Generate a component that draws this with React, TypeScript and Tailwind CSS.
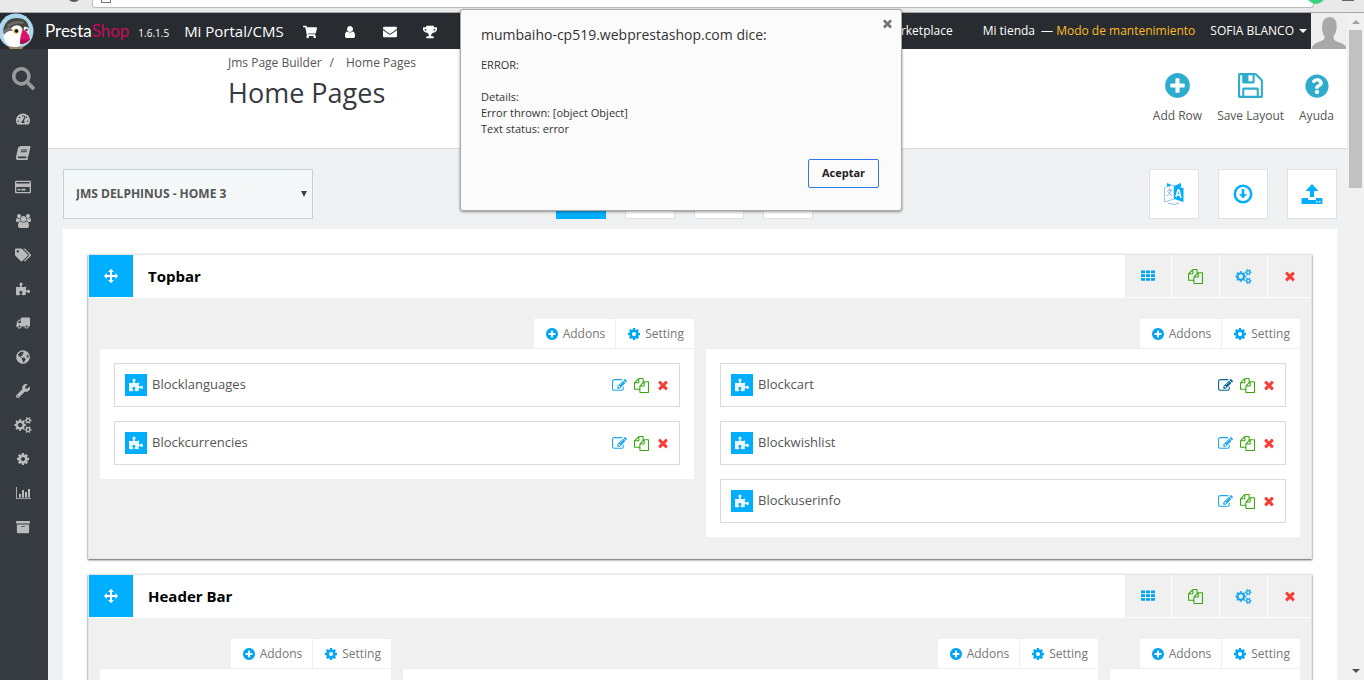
import type { ReactNode } from "react";
import {
  FaArchive,
  FaBook,
  FaEnvelope,
  FaGlobeAmericas,
  FaPuzzlePiece,
  FaQuestionCircle,
  FaRegCreditCard,
  FaSearch,
  FaShoppingCart,
  FaTachometerAlt,
  FaTags,
  FaTrophy,
  FaTruck,
  FaWrench,
} from "react-icons/fa";

const paths = {
  files:
    "M1696 384q40 0 68 28t28 68v1216q0 40-28 68t-68 28h-960q-40 0-68-28t-28-68v-288h-544q-40 0-68-28t-28-68v-672q0-40 20-88t48-76l408-408q28-28 76-48t88-20h416q40 0 68 28t28 68v328q68-40 128-40h416zm-544 213l-299 299h299v-299zm-640-384l-299 299h299v-299zm196 647l316-316v-416h-384v416q0 40-28 68t-68 28h-416v640h512v-256q0-40 20-88t48-76zm956 804v-1152h-384v416q0 40-28 68t-68 28h-416v640h896z",
  edit: "M888 1184l116-116-152-152-116 116v56h96v96h56zm440-720q-16-16-33 1l-350 350q-17 17-1 33t33-1l350-350q17-17 1-33zm80 594v190q0 119-84.5 203.5t-203.5 84.5h-832q-119 0-203.5-84.5t-84.5-203.5v-832q0-119 84.5-203.5t203.5-84.5h832q63 0 117 25 15 7 18 23 3 17-9 29l-49 49q-14 14-32 8-23-6-45-6h-832q-66 0-113 47t-47 113v832q0 66 47 113t113 47h832q66 0 113-47t47-113v-126q0-13 9-22l64-64q15-15 35-7t20 29zm-96-738l288 288-672 672h-288v-288zm444 132l-92 92-288-288 92-92q28-28 68-28t68 28l152 152q28 28 28 68t-28 68z",
  cog: "M1152 896q0-106-75-181t-181-75-181 75-75 181 75 181 181 75 181-75 75-181zm512-109v222q0 12-8 23t-20 13l-185 28q-19 54-39 91 35 50 107 138 10 12 10 25t-9 23q-27 37-99 108t-94 71q-12 0-26-9l-138-108q-44 23-91 38-16 136-29 186-7 28-36 28h-222q-14 0-24.5-8.5t-11.5-21.5l-28-184q-49-16-90-37l-141 107q-10 9-25 9-14 0-25-11-126-114-165-168-7-10-7-23 0-12 8-23 15-21 51-66.5t54-70.5q-27-50-41-99l-183-27q-13-2-21-12.5t-8-23.5v-222q0-12 8-23t19-13l186-28q14-46 39-92-40-57-107-138-10-12-10-24 0-10 9-23 26-36 98.5-107.5t94.5-71.5q13 0 26 10l138 107q44-23 91-38 16-136 29-186 7-28 36-28h222q14 0 24.5 8.5t11.5 21.5l28 184q49 16 90 37l142-107q9-9 24-9 13 0 25 10 129 119 165 170 7 8 7 22 0 12-8 23-15 21-51 66.5t-54 70.5q26 50 41 98l183 28q13 2 21 12.5t8 23.5z",
  cogs: "M832 896q0-106-75-181t-181-75-181 75-75 181 75 181 181 75 181-75 75-181zm768 512q0-52-38-90t-90-38-90 38-38 90q0 53 37.5 90.5t90.5 37.5 90.5-37.5 37.5-90.5zm0-1024q0-52-38-90t-90-38-90 38-38 90q0 53 37.5 90.5t90.5 37.5 90.5-37.5 37.5-90.5zm-384 421v185q0 10-7 19.5t-16 10.5l-155 24q-11 35-32 76 34 48 90 115 7 11 7 20 0 12-7 19-23 30-82.5 89.5t-78.5 59.5q-11 0-21-7l-115-90q-37 19-77 31-11 108-23 155-7 24-30 24h-186q-11 0-20-7.5t-10-17.5l-23-153q-34-10-75-31l-118 89q-7 7-20 7-11 0-21-8-144-133-144-160 0-9 7-19 10-14 41-53t47-61q-23-44-35-82l-152-24q-10-1-17-9.5t-7-19.5v-185q0-10 7-19.5t16-10.5l155-24q11-35 32-76-34-48-90-115-7-11-7-20 0-12 7-20 22-30 82-89t79-59q11 0 21 7l115 90q34-18 77-32 11-108 23-154 7-24 30-24h186q11 0 20 7.5t10 17.5l23 153q34 10 75 31l118-89q8-7 20-7 11 0 21 8 144 133 144 160 0 8-7 19-12 16-42 54t-45 60q23 48 34 82l152 23q10 2 17 10.5t7 19.5zm640 533v140q0 16-149 31-12 27-30 52 51 113 51 138 0 4-4 7-122 71-124 71-8 0-46-47t-52-68q-20 2-30 2t-30-2q-14 21-52 68t-46 47q-2 0-124-71-4-3-4-7 0-25 51-138-18-25-30-52-149-15-149-31v-140q0-16 149-31 13-29 30-52-51-113-51-138 0-4 4-7 4-2 35-20t59-34 30-16q8 0 46 46.5t52 67.5q20-2 30-2t30 2q51-71 92-112l6-2q4 0 124 70 4 3 4 7 0 25-51 138 17 23 30 52 149 15 149 31zm0-1024v140q0 16-149 31-12 27-30 52 51 113 51 138 0 4-4 7-122 71-124 71-8 0-46-47t-52-68q-20 2-30 2t-30-2q-14 21-52 68t-46 47q-2 0-124-71-4-3-4-7 0-25 51-138-18-25-30-52-149-15-149-31v-140q0-16 149-31 13-29 30-52-51-113-51-138 0-4 4-7 4-2 35-20t59-34 30-16q8 0 46 46.5t52 67.5q20-2 30-2t30 2q51-71 92-112l6-2q4 0 124 70 4 3 4 7 0 25-51 138 17 23 30 52 149 15 149 31z",
  times:
    "M1490 1322q0 40-28 68l-136 136q-28 28-68 28t-68-28l-294-294-294 294q-28 28-68 28t-68-28l-136-136q-28-28-28-68t28-68l294-294-294-294q-28-28-28-68t28-68l136-136q28-28 68-28t68 28l294 294 294-294q28-28 68-28t68 28l136 136q28 28 28 68t-28 68l-294 294 294 294q28 28 28 68z",
  plus: "M1344 960v-128q0-26-19-45t-45-19h-256v-256q0-26-19-45t-45-19h-128q-26 0-45 19t-19 45v256h-256q-26 0-45 19t-19 45v128q0 26 19 45t45 19h256v256q0 26 19 45t45 19h128q26 0 45-19t19-45v-256h256q26 0 45-19t19-45zm320-64q0 209-103 385.5t-279.5 279.5-385.5 103-385.5-103-279.5-279.5-103-385.5 103-385.5 279.5-279.5 385.5-103 385.5 103 279.5 279.5 103 385.5z",
  arrows:
    "M1792 896q0 26-19 45l-256 256q-19 19-45 19t-45-19-19-45v-128h-384v384h128q26 0 45 19t19 45-19 45l-256 256q-19 19-45 19t-45-19l-256-256q-19-19-19-45t19-45 45-19h128v-384h-384v128q0 26-19 45t-45 19-45-19l-256-256q-19-19-19-45t19-45l256-256q19-19 45-19t45 19 19 45v128h384v-384h-128q-26 0-45-19t-19-45 19-45l256-256q19-19 45-19t45 19l256 256q19 19 19 45t-19 45-45 19h-128v384h384v-128q0-26 19-45t45-19 45 19l256 256q19 19 19 45z",
  user: "M1536 1399q0 109-62.5 187t-150.5 78h-854q-88 0-150.5-78t-62.5-187q0-85 8.5-160.5t31.5-152 58.5-131 94-89 134.5-34.5q131 128 313 128t313-128q76 0 134.5 34.5t94 89 58.5 131 31.5 152 8.5 160.5zm-256-887q0 159-112.5 271.5t-271.5 112.5-271.5-112.5-112.5-271.5 112.5-271.5 271.5-112.5 271.5 112.5 112.5 271.5z",
  users:
    "M593 896q-162 5-265 128h-134q-82 0-138-40.5t-56-118.5q0-353 124-353 6 0 43.5 21t97.5 42.5 119 21.5q67 0 133-23-5 37-5 66 0 159 81 283zm1071 637q0 120-73 189.5t-194 69.5h-874q-121 0-194-69.5t-73-189.5q0-53 3.5-103.5t14-109 26.5-108.5 43-97.5 62-81 85.5-53.5 111.5-20q10 0 43 21.5t73 48 107 48 135 21.5 135-21.5 107-48 73-48 43-21.5q61 0 111.5 20t85.5 53.5 62 81 43 97.5 26.5 108.5 14 109 3.5 103.5zm-1024-1277q0 106-75 181t-181 75-181-75-75-181 75-181 181-75 181 75 75 181zm704 384q0 159-112.5 271.5t-271.5 112.5-271.5-112.5-112.5-271.5 112.5-271.5 271.5-112.5 271.5 112.5 112.5 271.5zm576 225q0 78-56 118.5t-138 40.5h-134q-103-123-265-128 81-124 81-283 0-29-5-66 66 23 133 23 59 0 119-21.5t97.5-42.5 43.5-21q124 0 124 353zm-128-609q0 106-75 181t-181 75-181-75-75-181 75-181 181-75 181 75 75 181z",
  th: "M0 192h512v352H0zM640 192h512v352H640zM1280 192h512v352h-512zM0 672h512v352H0zM640 672h512v352H640zM1280 672h512v352h-512zM0 1152h512v352H0zM640 1152h512v352H640zM1280 1152h512v352h-512z",
  chart:
    "M0 128h110v1430h1800v110H0zM384 1024h256v448H384zM768 512h256v960H768zM1152 768h256v704h-256zM1536 384h256v1088h-256z",
  save: "M512 1536h768v-384h-768v384zm896 0h128v-896q0-14-10-38.5t-20-34.5l-281-281q-10-10-34-20t-39-10v416q0 40-28 68t-68 28h-576q-40 0-68-28t-28-68v-416h-128v1280h128v-416q0-40 28-68t68-28h832q40 0 68 28t28 68v416zm-384-928v-320q0-13-9.5-22.5t-22.5-9.5h-192q-13 0-22.5 9.5t-9.5 22.5v320q0 13 9.5 22.5t22.5 9.5h192q13 0 22.5-9.5t9.5-22.5zm640 32v928q0 40-28 68t-68 28h-1344q-40 0-68-28t-28-68v-1344q0-40 28-68t68-28h928q40 0 88 20t76 48l280 280q28 28 48 76t20 88z",
};

function Icon({ name, className }: { name: keyof typeof paths; className: string }) {
  return (
    <svg viewBox="0 0 1792 1792" fill="currentColor" className={`shrink-0 overflow-visible ${className}`} aria-hidden>
      <path d={paths[name]} />
    </svg>
  );
}

const sidebar: { label: string; icon: ReactNode }[] = [
  { label: "Dashboard", icon: <FaTachometerAlt /> },
  { label: "Catalog", icon: <FaBook className="skew-x-[-12deg]" /> },
  { label: "Orders", icon: <FaRegCreditCard className="size-4" /> },
  { label: "Customers", icon: <Icon name="users" className="size-[14px]" /> },
  { label: "Price rules", icon: <FaTags className="size-4" /> },
  { label: "Modules", icon: <FaPuzzlePiece /> },
  { label: "Shipping", icon: <FaTruck className="-scale-x-100" /> },
  { label: "Localization", icon: <FaGlobeAmericas /> },
  { label: "Preferences", icon: <FaWrench /> },
  { label: "Advanced", icon: <Icon name="cogs" className="size-4" /> },
  { label: "Administration", icon: <Icon name="cog" className="size-[14px]" /> },
  { label: "Stats", icon: <Icon name="chart" className="size-[14px]" /> },
  { label: "Stock", icon: <FaArchive /> },
];

function BrowserBar() {
  return (
    <div className="relative flex h-[13px] shrink-0 items-start overflow-hidden border-b border-[#a6a6a6] bg-[#e9e9e9]">
      <div className="ml-[92px] mr-[50px] flex h-2 grow items-start overflow-hidden rounded-b-[3px] border border-t-0 border-[#bdbdbd] bg-white pl-2">
        <span className="h-[3px] w-[10px] shrink-0 border border-t-0 border-[#777]" />
        <input
          aria-label="Address"
          readOnly
          className="-mt-4 ml-[13px] h-4 grow text-[15px] leading-4 text-[#666]"
          defaultValue="mumbaiho-cp519.webprestashop.com/admin123/index.php?controller=AdminJmspagebuilderHomepages"
        />
      </div>
      <span className="absolute left-[67px] top-[-12px] size-[14px] rounded-full border-2 border-[#555]" />
      <span className="absolute right-[39px] top-[-14px] size-[18px] rounded-full bg-[#3dd37c]" />
      <span className="absolute right-[10px] top-0 h-px w-3 bg-[#666]" />
    </div>
  );
}

function Logo() {
  return (
    <svg viewBox="0 0 35 36" className="h-9 w-[35px] shrink-0" aria-hidden>
      <circle cx="16" cy="18" r="17.5" fill="#a9d9ea" />
      <path d="M3 18Q5 5 17 5q11 0 12 11l-3 5-12-2-6 2z" fill="#454642" />
      <path d="M7 12q8-6 17-3l-1 2q-8-2-15 4z" fill="#6c6d68" />
      <path d="M3 19q3-4 8-4 4-4 9-2 3 2 3 7l-2 12q-7 4-12 1-6-5-6-14z" fill="#fff" />
      <path d="M24 14q4-1 5 3v5l-6-3z" fill="#f4f4f4" />
      <path d="M3 19q3-4 8-4l2 3q-5-1-9 4z" fill="#6d6d6d" />
      <circle cx="16" cy="18" r="2.6" fill="#d8b04a" />
      <circle cx="16.5" cy="18" r="1.8" fill="#151515" />
      <circle cx="26.5" cy="17" r="1.2" fill="#333" />
      <path d="M23 16q6 4 7 10-3 5-10 5 0-9 3-15z" fill="#df1168" />
      <path d="M21 26q4 1 9 0-3 5-10 5z" fill="#b00c50" />
      <path d="M8 33q8 2 16 0l-2 3H10z" fill="#a58b68" />
    </svg>
  );
}

function TopBar() {
  return (
    <header className="flex h-9 shrink-0 items-center justify-between bg-[#282b30] text-[12px] text-white">
      <div className="flex items-center">
        <Logo />
        <span className="ml-[10px] font-[Lato] text-[17px] leading-9">
          Presta<span className="text-[#c60b5f]">Shop</span>
        </span>
        <span className="ml-[9px] pt-1 text-[10px]">1.6.1.5</span>
        <a href="#" className="ml-[15px] text-[15px]">Mi Portal/CMS</a>
        <nav className="ml-[19px] flex items-center gap-[26px] pt-0.5 text-[14px]">
          <a href="#" aria-label="Orders"><FaShoppingCart /></a>
          <a href="#" aria-label="Customers"><Icon name="user" className="size-[14px]" /></a>
          <a href="#" aria-label="Messages"><FaEnvelope /></a>
          <a href="#" aria-label="Achievements"><FaTrophy /></a>
        </nav>
      </div>
      <div className="flex items-center">
        <a href="#">PrestaShop Marketplace</a>
        <a href="#" className="ml-[30px]">Mi tienda</a>
        <span className="ml-[6px] text-[#fbbb22]">
          <span className="text-white">—</span> Modo de mantenimiento
        </span>
        <button className="ml-[15px] flex items-center gap-[5px]">
          SOFIA BLANCO
          <span className="border-x-4 border-t-4 border-x-transparent border-t-white" />
        </button>
        <svg viewBox="0 0 35 36" className="ml-1 h-9 w-9" preserveAspectRatio="none" aria-label="Sofia Blanco">
          <path d="M0 0h35v36H0z" fill="#eee" />
          <path d="M1 36v-2q2-4 9-6 4-2 3-5-3-4-2-12Q12 4 19 4q6 1 6 9 0 6-3 10-1 4 4 6 7 2 8 5v2z" fill="#a8a8a8" />
        </svg>
      </div>
    </header>
  );
}

function Sidebar() {
  return (
    <nav className="w-12 shrink-0 bg-[#363a41] text-[#bbb]">
      <button className="flex h-[53px] w-full items-center justify-center pt-1.5 pr-0.5 text-[#999]" aria-label="Search">
        <FaSearch className="size-[23px]" />
      </button>
      <ul>
        {sidebar.map(({ label, icon }) => (
          <li key={label}>
            <a href="#" aria-label={label} className="flex h-[34px] items-center justify-center pr-0.5 text-[14px]">
              {icon}
            </a>
          </li>
        ))}
      </ul>
    </nav>
  );
}

function PageHead() {
  return (
    <div className="flex h-[100px] justify-between border-b border-[#ddd] bg-white pl-[180px] pr-[13px]">
      <div className="pt-1">
        <div className="flex gap-2 text-[12px] leading-5 text-[#555]">
          <a href="#">Jms Page Builder</a>
          <span>/</span>
          <a href="#" className="ml-1">Home Pages</a>
        </div>
        <h1 className="pt-1 text-[27px] leading-8 text-[#363a41]">Home Pages</h1>
      </div>
      <div className="flex items-start gap-[15px] pt-[22px] text-[12px] text-[#555]">
        <button className="flex flex-col items-center gap-[7px]">
          <Icon name="plus" className="size-[29px] text-[#2eacce]" />
          Add Row
        </button>
        <button className="flex flex-col items-center gap-[7px]">
          <Icon name="save" className="size-[29px] text-[#2eacce]" />
          Save Layout
        </button>
        <button className="flex flex-col items-center gap-[7px]">
          <span className="flex size-[29px] items-center justify-center">
            <FaQuestionCircle className="size-6 text-[#2eacce]" />
          </span>
          Ayuda
        </button>
      </div>
    </div>
  );
}

function ToolButton({ label, children }: { label: string; children?: ReactNode }) {
  return (
    <button aria-label={label} className="flex size-[50px] items-center justify-center border border-[#e2e2e2] bg-white">
      {children}
    </button>
  );
}

function Toolbar() {
  return (
    <div className="flex h-[80px] items-center pl-[15px] pr-2.5 pt-2.5">
      <div className="relative w-[250px]">
        <select
          aria-label="Home page"
          className="h-[50px] w-full appearance-none border border-[#c2d3d6] bg-[#f4f8f9] px-3 text-[12px] font-bold text-[#555]"
        >
          <option>JMS DELPHINUS - HOME 3</option>
        </select>
        <span className="pointer-events-none absolute right-[6px] top-[22px] border-x-[3px] border-t-[6px] border-x-transparent border-t-[#444]" />
      </div>
      <div className="mr-auto ml-[243px] flex gap-[19px]">
        <button aria-label="Desktop" className="size-[50px] bg-[#00aeff]" />
        <ToolButton label="Laptop" />
        <ToolButton label="Tablet" />
        <ToolButton label="Phone" />
      </div>
      <div className="flex gap-[19px] text-[#00aeff]">
        <ToolButton label="Language">
          <svg viewBox="0 0 20 22" className="h-[22px] w-5">
            <path d="M3 0l7 3 7-3v4l-7 2-7-2z" fill="#00aeff" />
            <path d="M.5 4.5L10 2v14L.5 19z" fill="#fff" stroke="#9ec2ef" />
            <path d="M10 3l9.5 2v14L10 16z" fill="#00aeff" />
            <path d="M3 8l5-1M5 5l1 2M7 7q-1 5-4 6M4 9l4 4M4 20q6 3 11 0" fill="none" stroke="#8ab4e8" />
            <path d="M12 14l2-7h1l2 8M13 12h3" fill="none" stroke="#fff" strokeWidth="1.5" />
          </svg>
        </ToolButton>
        <ToolButton label="Import">
          <svg viewBox="0 0 20 20" className="size-5" fill="none" stroke="currentColor">
            <circle cx="10" cy="10" r="8.2" strokeWidth="2.5" />
            <path d="M8.7 5h2.6v5H14l-4 4.5L6 10h2.7z" fill="currentColor" stroke="none" />
          </svg>
        </ToolButton>
        <ToolButton label="Export">
          <svg viewBox="0 0 22 20" className="h-5 w-[22px]" fill="currentColor">
            <path d="M11 0l6.5 7H13v6H9V7H4.5zM1.5 14H7v1q0 1 1 1h6q1 0 1-1v-1h5.5q1 0 1 1v4q0 1-1 1h-19q-1 0-1-1v-4q0-1 1-1zM15 17v1.5h1.5V17zm3 0v1.5h1.5V17z" fillRule="evenodd" />
          </svg>
        </ToolButton>
      </div>
    </div>
  );
}

function Addon({ name, active }: { name: string; active?: boolean }) {
  return (
    <li className="flex h-11 items-center border border-[#dadbdf] bg-white pl-2.5 pr-[9px]">
      <span className="flex size-[22px] items-center justify-center bg-[#00aeff] text-[#eef6fb]">
        <FaPuzzlePiece className="size-[14px]" />
      </span>
      <span className="ml-[5px] grow text-[13px] text-[#555]">{name}</span>
      <div className="flex items-center gap-[7px]">
        <button aria-label={`Edit ${name}`} className={active ? "text-[#00669c]" : "text-[#1ba5ea]"}>
          <Icon name="edit" className="size-[15px]" />
        </button>
        <button aria-label={`Duplicate ${name}`} className="text-[#36a70c]">
          <Icon name="files" className="size-[15px]" />
        </button>
        <button aria-label={`Delete ${name}`} className="text-[#fa3c37]">
          <Icon name="times" className="size-[14px]" />
        </button>
      </div>
    </li>
  );
}

function Column({ addons, className }: { addons: string[]; className: string }) {
  return (
    <div className={`px-1.5 ${className}`}>
      <div className="flex justify-end gap-px text-[12px] text-[#777]">
        <button className="flex h-[29px] items-center gap-1 bg-white pl-[11px] pr-2.5">
          <Icon name="plus" className="size-[14px] text-[#00a5f7]" />
          Addons
        </button>
        <button className="flex h-[29px] items-center gap-1 bg-white pl-[11px] pr-2.5">
          <Icon name="cog" className="size-[14px] text-[#00a5f7]" />
          Setting
        </button>
      </div>
      <ul className="mt-px flex min-h-[30px] flex-col gap-[14px] bg-white p-[14px]">
        {addons.map((name) => (
          <Addon key={name} name={name} active={name === "Blockcart"} />
        ))}
      </ul>
    </div>
  );
}

function Row({ title, children }: { title: string; children: ReactNode }) {
  return (
    <section className="mb-[15px] border border-[#e5e5e5] bg-[#f0f0f0] shadow-[0_1px_2px_rgba(0,0,0,0.65)]">
      <div className="flex h-[43px] border-b border-white bg-white">
        <button aria-label={`Move ${title}`} className="flex w-11 items-center justify-center bg-[#00aeff] text-white">
          <Icon name="arrows" className="size-[14px]" />
        </button>
        <h2 className="grow pl-[15px] text-[15px] font-bold leading-[43px] text-black">{title}</h2>
        <div className="flex gap-px">
          <button aria-label="Columns" className="flex w-[46px] items-center justify-center bg-[#f0f0f0] text-[#00a5f7]">
            <Icon name="th" className="size-[14px]" />
          </button>
          <button aria-label="Duplicate row" className="flex w-[47px] items-center justify-center bg-[#f0f0f0] text-[#36a70c]">
            <Icon name="files" className="size-[15px]" />
          </button>
          <button aria-label="Row settings" className="flex w-[47px] items-center justify-center bg-[#f0f0f0] text-[#1ba5ea]">
            <Icon name="cogs" className="size-[15px]" />
          </button>
          <button aria-label="Delete row" className="flex w-[43px] items-center justify-center bg-[#f0f0f0] text-[#fa3c37]">
            <Icon name="times" className="size-[14px]" />
          </button>
        </div>
      </div>
      <div className="flex items-start px-[5px] py-[21px]">{children}</div>
    </section>
  );
}

function AlertDialog() {
  return (
    <div
      role="alertdialog"
      aria-labelledby="alert-title"
      className="absolute left-1/2 top-[9px] -ml-[222px] h-[202px] w-[442px] rounded-[3px] border border-[#a9a9a9] bg-[#fbfbfb] px-5 pt-[14px] text-[#333] shadow-[0_1px_3px_rgba(0,0,0,0.4)]"
    >
      <button aria-label="Close" className="absolute right-[7px] top-[7px] text-[#777]">
        <Icon name="times" className="size-[13px]" />
      </button>
      <h2 id="alert-title" className="text-[14px] leading-[22px]">mumbaiho-cp519.webprestashop.com dice:</h2>
      <p className="mt-[11px] whitespace-pre-line text-[11px] leading-4">
        {"ERROR:\n\nDetails:\nError thrown: [object Object]\nText status: error"}
      </p>
      <div className="mt-[22px] flex justify-end pr-0.5">
        <button className="h-[29px] w-[71px] rounded-[2px] border border-[#3079ed] text-[11px] font-bold text-[#222]">
          Aceptar
        </button>
      </div>
    </div>
  );
}

function Scrollbar() {
  return (
    <div className="flex w-[17px] shrink-0 flex-col items-center bg-[#f1f1f1] py-[7px]" aria-hidden>
      <span className="border-x-4 border-b-4 border-x-transparent border-b-[#a0a0a0]" />
      <span className="mt-[6px] h-[158px] w-[13px] bg-[#c1c1c1]" />
      <span className="mt-auto border-x-4 border-t-4 border-x-transparent border-t-[#505050]" />
    </div>
  );
}

export default function App() {
  return (
    <div className="relative flex h-screen flex-col overflow-hidden bg-[#eff1f3] font-['Open_Sans',sans-serif]">
      <BrowserBar />
      <div className="flex min-h-0 grow">
        <div className="flex min-w-0 grow flex-col">
          <TopBar />
          <div className="flex min-h-0 grow">
            <Sidebar />
            <main className="min-w-0 grow">
              <PageHead />
              <Toolbar />
              <div className="mr-2.5 ml-[15px] bg-white px-[25px] pt-[25px]">
                <Row title="Topbar">
                  <Column className="w-1/2" addons={["Blocklanguages", "Blockcurrencies"]} />
                  <Column className="w-1/2" addons={["Blockcart", "Blockwishlist", "Blockuserinfo"]} />
                </Row>
                <Row title="Header Bar">
                  <Column className="w-1/4" addons={[]} />
                  <Column className="w-7/12" addons={[]} />
                  <Column className="w-1/6" addons={[]} />
                </Row>
              </div>
            </main>
          </div>
        </div>
        <Scrollbar />
      </div>
      <AlertDialog />
    </div>
  );
}
